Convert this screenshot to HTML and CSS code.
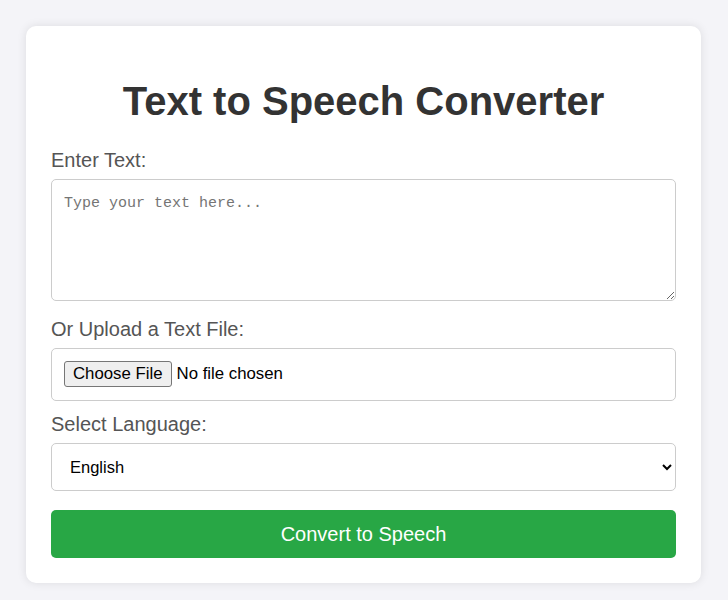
FILE: index.html
```html
<!DOCTYPE html>
<html lang="en">
<head>
<meta charset="utf-8">
<title>Text to Speech Converter</title>
<link rel="stylesheet" href="styles.css">
</head>
<body>
<div class="card">
  <h1 class="title">Text to Speech Converter</h1>
  <label class="label" for="text">Enter Text:</label>
  <textarea id="text" class="textarea" placeholder="Type your text here..."></textarea>
  <label class="label" for="file">Or Upload a Text File:</label>
  <input id="file" class="file" type="file" accept=".txt">
  <label class="label" for="lang">Select Language:</label>
  <select id="lang" class="select">
    <option>English</option>
    <option>Spanish</option>
    <option>French</option>
  </select>
  <button class="btn" type="button">Convert to Speech</button>
</div>
</body>
</html>
```
FILE: styles.css
```css
html, body {
  margin: 0;
  padding: 0;
}
body {
  background: #f4f4f8;
  font-family: "Liberation Sans", Arial, sans-serif;
  padding: 26px 27px 17px 26px;
}
.card {
  background: #fff;
  border-radius: 10px;
  box-shadow: 0 0 10px rgba(0, 0, 0, 0.1);
  padding: 25px;
  display: flex;
  flex-direction: column;
}
.title {
  margin: 27px 0 25px;
  text-align: center;
  font-size: 40px;
  line-height: 46px;
  color: #333;
  font-weight: bold;
}
.label {
  display: block;
  font-size: 20px;
  line-height: 23px;
  color: #555;
  margin-bottom: 7px;
}
.textarea {
  box-sizing: border-box;
  width: 100%;
  height: 122px;
  padding: 14px 12px 12px;
  border: 1px solid #ccc;
  border-radius: 5px;
  font-family: "Liberation Mono", monospace;
  font-size: 15px;
  line-height: 20px;
  margin: 0 0 17px;
  resize: vertical;
}
.textarea::placeholder {
  color: #757575;
}
.file {
  box-sizing: border-box;
  width: 100%;
  height: 53px;
  padding: 12px;
  border: 1px solid #ccc;
  border-radius: 5px;
  font-family: "Liberation Sans", Arial, sans-serif;
  font-size: 16.8px;
  color: #000;
  margin: 0 0 12px;
}
.file::file-selector-button {
  font-family: "Liberation Sans", Arial, sans-serif;
  font-size: 16.8px;
  padding: 2px 8px;
  margin-right: 5px;
  border: 1px solid #767676;
  border-radius: 3px;
  background: #efefef;
  color: #000;
}
.select {
  box-sizing: border-box;
  width: 100%;
  height: 48px;
  padding: 0 14px 0 14px;
  border: 1px solid #ccc;
  border-radius: 5px;
  font-family: "Liberation Sans", Arial, sans-serif;
  font-size: 16.5px;
  background: #fff;
  color: #000;
  margin: 0 0 19px;
}
.btn {
  height: 48px;
  width: 100%;
  border: none;
  border-radius: 5px;
  background: #28a745;
  color: #fff;
  font-family: "Liberation Sans", Arial, sans-serif;
  font-size: 20px;
  cursor: pointer;
}
```
